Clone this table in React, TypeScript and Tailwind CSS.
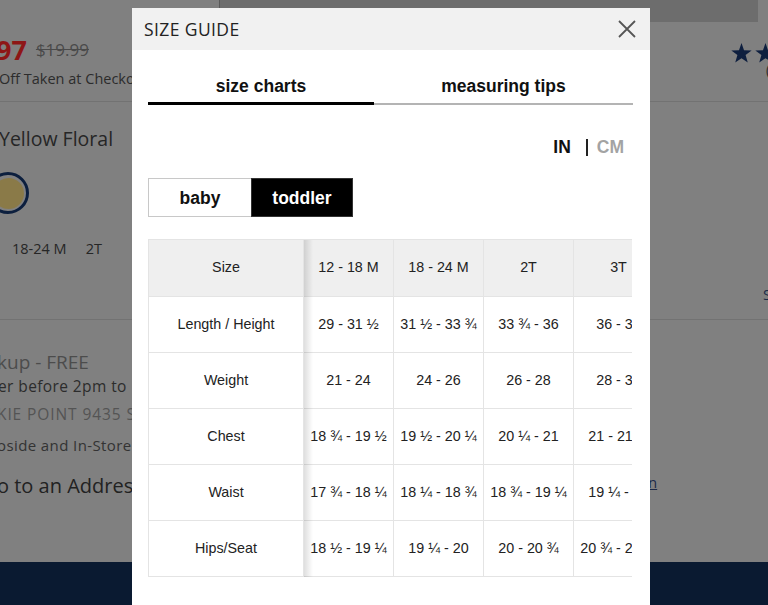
import React from "react";

const bgFont = { fontFamily: '"Open Sans", "Noto Sans", sans-serif' };
const mFont = { fontFamily: '"Liberation Sans", Arial, sans-serif' };

function Star() {
  return (
    <svg width="21" height="20" viewBox="0 0 24 23" className="shrink-0">
      <polygon
        points="12,0 14.9,8.3 23.7,8.5 16.7,13.9 19.2,22.4 12,17.4 4.8,22.4 7.3,13.9 0.3,8.5 9.1,8.3"
        fill="#0e1f3f"
      />
    </svg>
  );
}

const rows: { label: string; vals: string[] }[] = [
  { label: "Length / Height", vals: ["29 - 31 ½", "31 ½ - 33 ¾", "33 ¾ - 36", "36 - 38"] },
  { label: "Weight", vals: ["21 - 24", "24 - 26", "26 - 28", "28 - 32"] },
  { label: "Chest", vals: ["18 ¾ - 19 ½", "19 ½ - 20 ¼", "20 ¼ - 21", "21 - 21 ¾"] },
  { label: "Waist", vals: ["17 ¾ - 18 ¼", "18 ¼ - 18 ¾", "18 ¾ - 19 ¼", "19 ¼ - 20"] },
  { label: "Hips/Seat", vals: ["18 ½ - 19 ¼", "19 ¼ - 20", "20 - 20 ¾", "20 ¾ - 21 ½"] },
];
const sizes = ["12 - 18 M", "18 - 24 M", "2T", "3T"];

function SizeTable() {
  return (
    <div className="relative mt-[22px] flex w-[484px] border-t border-l border-[#e4e4e4] text-[14.3px] text-[#222]" style={mFont}>
      <div className="w-[155px] shrink-0">
        <div className="flex h-[57px] items-center justify-center border-r border-b border-[#e4e4e4] bg-[#efefef]">Size</div>
        {rows.map((r) => (
          <div key={r.label} className="flex h-[56px] items-center justify-center border-r border-b border-[#e4e4e4] bg-white">
            {r.label}
          </div>
        ))}
      </div>
      <div className="flex-1 overflow-hidden">
        <div className="grid w-[360px] grid-cols-[90px_90px_90px_90px]">
          {sizes.map((s) => (
            <div key={s} className="flex h-[57px] items-center justify-center whitespace-nowrap border-r border-b border-[#e4e4e4] bg-[#efefef]">
              {s}
            </div>
          ))}
          {rows.map((r) =>
            r.vals.map((v, i) => (
              <div key={r.label + i} className="flex h-[56px] items-center justify-center whitespace-nowrap border-r border-b border-[#e4e4e4] bg-white">
                {v}
              </div>
            ))
          )}
        </div>
      </div>
      <div className="pointer-events-none absolute top-0 bottom-0 left-[155px] w-[9px] bg-gradient-to-r from-[rgba(0,0,0,0.13)] to-transparent" />
    </div>
  );
}

function Modal() {
  return (
    <div className="absolute left-[132px] top-[8px] h-[620px] w-[518px] bg-white">
      <div className="flex h-[42px] items-center justify-between bg-[#f1f1f1] pl-[12px] pr-[13px]">
        <span className="text-[17.5px] tracking-[0.4px] text-[#222]" style={bgFont}>SIZE GUIDE</span>
        <svg width="20" height="20" viewBox="0 0 20 20">
          <path d="M2 2 L18 18 M18 2 L2 18" stroke="#555" strokeWidth="1.8" fill="none" />
        </svg>
      </div>
      <div className="pl-[16px] pr-[17px]" style={mFont}>
        <div className="flex items-end pt-[24px] text-[17.5px] font-bold text-[#111]">
          <div className="flex w-[226px] justify-center border-b-[3px] border-black pb-[4px] leading-[24px]">size charts</div>
          <div className="flex flex-1 justify-center border-b-2 border-[#b4b4b4] pb-[5px] leading-[24px]">measuring tips</div>
        </div>
        <div className="mt-[30px] flex h-[24px] items-center justify-end pr-[9px] text-[17.5px] font-bold">
          <span className="text-[#111]">IN</span>
          <span className="ml-[15px] mr-[9px] h-[17px] w-[2px] bg-[#222]" />
          <span className="text-[#a3a3a3]">CM</span>
        </div>
        <div className="mt-[19px] flex text-[17.5px] font-bold">
          <div className="flex h-[39px] w-[103px] items-center justify-center border border-r-0 border-[#c8c8c8] pt-[2px] text-[#111]">baby</div>
          <div className="flex h-[39px] w-[102px] items-center justify-center border border-[#333] bg-black pt-[2px] text-white">toddler</div>
        </div>
        <SizeTable />
      </div>
    </div>
  );
}

export default function App() {
  return (
    <div className="relative flex h-[605px] w-[768px] flex-col overflow-hidden bg-[#808080]" style={bgFont}>
      {/* top image strip */}
      <div className="flex h-[22px] shrink-0">
        <div className="w-[220px] shrink-0 border-r border-[#5a5a5a]" />
        <div className="w-[538px] shrink-0 bg-[#6d6d6d]" />
      </div>
      {/* price section */}
      <div className="flex h-[80px] shrink-0 border-b border-[#727272]">
        <div className="w-[650px] shrink-0 pt-[12px]">
          <div className="flex h-[32px] items-center">
            <span className="-ml-[4px] text-[27px] font-bold text-[#8e1616]">97</span>
            <span className="ml-[9px] text-[17px] text-[#4a4a4a] line-through">$19.99</span>
          </div>
          <div className="mt-[3px] -ml-[1px] h-[20px] whitespace-nowrap text-[14.5px] leading-[20px] text-[#2c2c2c]">Off Taken at Checkout</div>
        </div>
        <div className="min-w-0 flex-1 overflow-hidden pt-[21px] pl-[81px]">
          <div className="flex gap-[3px]"><Star /><Star /></div>
          <div className="mt-[-2px] ml-[35px] text-[14px] leading-[18px] text-[#2c2c2c]">(</div>
        </div>
      </div>
      {/* color & size section */}
      <div className="flex h-[218px] shrink-0 border-b border-[#727272]">
        <div className="w-[650px] shrink-0 pt-[24px]">
          <div className="-ml-[1px] h-[26px] text-[19.5px] leading-[26px] text-[#262626]">Yellow Floral</div>
          <div className="mt-[20px] -ml-[13px] flex h-[42px] w-[42px] items-center justify-center rounded-full border-[3px] border-[#0c1f3e]">
            <div className="h-[31px] w-[31px] rounded-full bg-[#8a7a48]" />
          </div>
          <div className="mt-[25px] flex h-[20px] items-center pl-[12px] text-[14.5px] text-[#262626]">
            <span>18-24 M</span>
            <span className="ml-[19px]">2T</span>
          </div>
        </div>
        <div className="min-w-0 flex-1 overflow-hidden whitespace-nowrap pt-[182px] pl-[113px] text-[14.5px] text-[#1c2a48]">See</div>
      </div>
      {/* pickup section */}
      <div className="flex flex-1">
        <div className="w-[650px] shrink-0 whitespace-nowrap pt-[29px]">
          <div className="-ml-[3px] h-[26px] text-[19px] leading-[26px] text-[#4c4c4c]">kup - FREE</div>
          <div className="mt-[1px] -ml-[2px] h-[20px] text-[15.5px] tracking-[0.4px] leading-[20px] text-[#2c2c2c]">er before 2pm to</div>
          <div className="mt-[8px] -ml-[3px] h-[20px] text-[15.5px] tracking-[0.9px] leading-[20px] text-[#545454]">KIE POINT 9435 S</div>
          <div className="mt-[11px] -ml-[3px] h-[20px] text-[15px] tracking-[0.4px] leading-[20px] text-[#333]">oside and In-Store</div>
          <div className="mt-[17px] -ml-[3px] h-[28px] text-[20px] leading-[28px] text-[#222]">o to an Address</div>
        </div>
        <div className="min-w-0 flex-1 overflow-hidden pt-[150px]">
          <span className="-ml-[2px] text-[15px] text-[#1c2a48] underline">n</span>
        </div>
      </div>
      <div className="h-[43px] shrink-0 bg-[#0a1a31]" />
      <Modal />
    </div>
  );
}
